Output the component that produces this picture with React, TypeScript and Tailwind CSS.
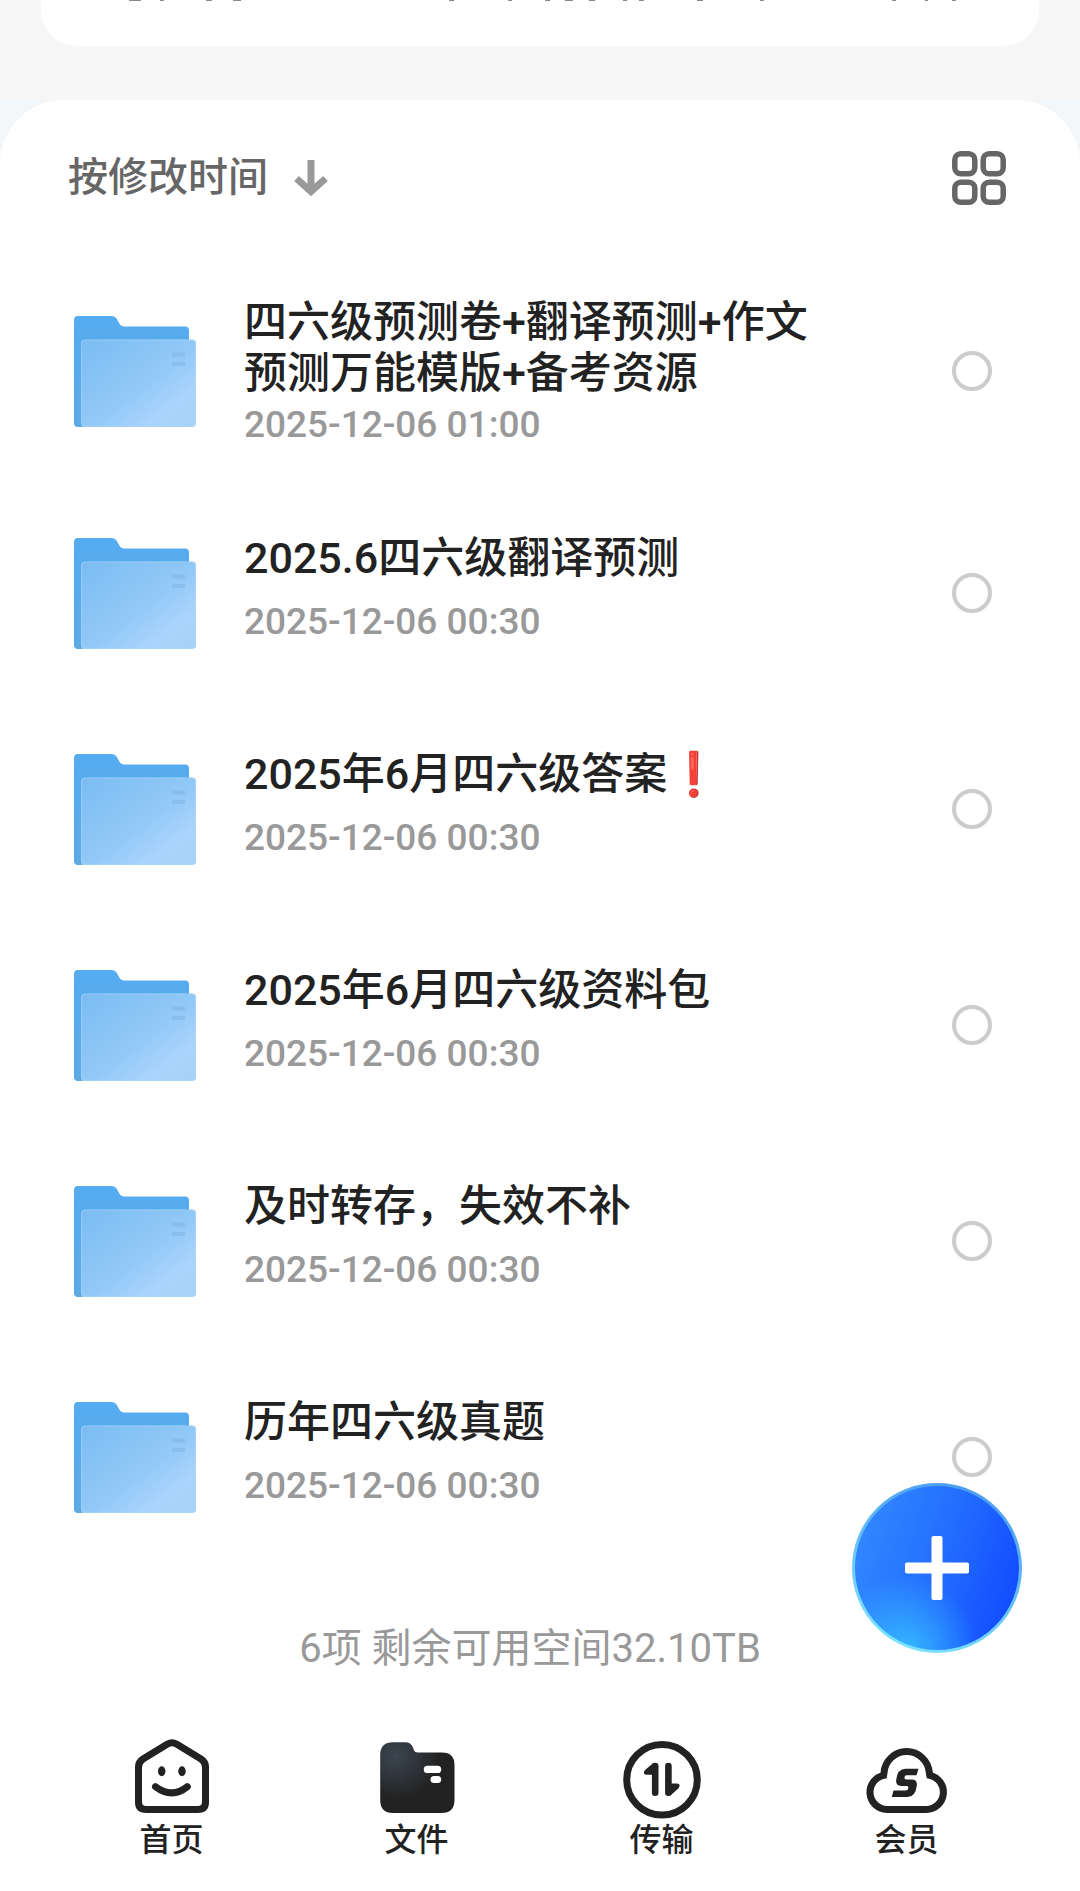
import React from "react";

type Item = { name: string; mark?: string; time: string };

const items: Item[] = [
  { name: "四六级预测卷+翻译预测+作文预测万能模版+备考资源", time: "2025-12-06 01:00" },
  { name: "2025.6四六级翻译预测", time: "2025-12-06 00:30" },
  { name: "2025年6月四六级答案", mark: "❗", time: "2025-12-06 00:30" },
  { name: "2025年6月四六级资料包", time: "2025-12-06 00:30" },
  { name: "及时转存，失效不补", time: "2025-12-06 00:30" },
  { name: "历年四六级真题", time: "2025-12-06 00:30" },
];

function FolderIcon() {
  return (
    <svg viewBox="0 0 122 111" className="h-[111px] w-[122px] shrink-0" aria-hidden="true">
      <defs>
        <linearGradient id="folder-back" x1="0" y1="0" x2="0" y2="1">
          <stop offset="0" stopColor="#55acf0" />
          <stop offset="1" stopColor="#5ba8e4" />
        </linearGradient>
        <linearGradient id="folder-front" x1="0" y1="0" x2="1" y2="1">
          <stop offset="0" stopColor="#7bbcf2" />
          <stop offset="0.5" stopColor="#90c8f7" />
          <stop offset="0.8" stopColor="#abd4fc" />
          <stop offset="1" stopColor="#a8d1fa" />
        </linearGradient>
      </defs>
      <path
        d="M4 0H38Q41 0 42.500 2.500L46 8.500Q47.500 10.500 50 10.500H111Q115 10.500 115 14.500V60H12V107Q11 111 7 111H4Q0 111 0 107V4Q0 0 4 0Z"
        fill="url(#folder-back)"
      />
      <rect x="7" y="23.500" width="115" height="87.500" rx="4" fill="url(#folder-front)" />
      <rect x="7.500" y="24" width="114" height="86.500" rx="4" fill="none" stroke="#b4d8f8" strokeOpacity="0.5" />
      <path d="M98 38.500H111M98 48H111" stroke="#85b5e2" strokeOpacity="0.6" strokeWidth="4" />
    </svg>
  );
}

function HomeIcon() {
  return (
    <svg viewBox="0 0 84 84" className="size-[84px]" fill="none" stroke="#222" strokeWidth="7" aria-hidden="true">
      <path d="M8.500 31Q8.500 26 13 23L37.500 8Q42 5.500 46.500 8L71 23Q75.500 26 75.500 31V66Q75.500 73.500 68 73.500H16Q8.500 73.500 8.500 66Z" />
      <ellipse cx="31.700" cy="35.300" rx="3.700" ry="5" fill="#222" stroke="none" />
      <ellipse cx="52" cy="35.300" rx="3.700" ry="5" fill="#222" stroke="none" />
      <path d="M25.500 50.700Q41.900 63 57.300 50.700" strokeLinecap="round" />
    </svg>
  );
}

function FilesIcon() {
  return (
    <svg viewBox="0 0 84 84" className="size-[84px]" aria-hidden="true">
      <defs>
        <radialGradient id="files-fill" cx="0.2" cy="0.2" r="0.6">
          <stop offset="0" stopColor="#3b4651" />
          <stop offset="1" stopColor="#222" />
        </radialGradient>
      </defs>
      <path
        d="M18 6.300H30Q36 6.300 38 11.500L39 14.500Q40 16.500 42.500 16.500H67Q79.500 16.500 79.500 29V64Q79.500 77 66.500 77H18Q5.200 77 5.200 64V19Q5.200 6.300 18 6.300Z"
        fill="url(#files-fill)"
      />
      <rect x="48.800" y="29.700" width="17.400" height="7.300" rx="3.600" fill="#fff" />
      <rect x="55.500" y="40" width="10.700" height="7" rx="3.500" fill="#fff" />
    </svg>
  );
}

function TransferIcon() {
  return (
    <svg viewBox="0 0 84 84" className="size-[84px]" fill="#222" stroke="#222" aria-hidden="true">
      <circle cx="42" cy="43.700" r="35.300" fill="none" strokeWidth="7" />
      <path d="M35.200 30V56.700M48.400 30V56.700" strokeWidth="6.600" strokeLinecap="round" />
      <path d="M33 27.200L25 34Q22 38.700 27 38.700H36V28Z" stroke="none" />
      <path d="M47 47.500H57Q61.500 48 58.500 52.200L50.500 59.400L47 58Z" stroke="none" />
    </svg>
  );
}

function MemberIcon() {
  return (
    <svg viewBox="0 0 84 84" className="size-[84px]" fill="none" stroke="#222" aria-hidden="true">
      <path
        d="M22 73.500A17.300 17.300 0 0 1 18.600 39.300L19 36.800A22.700 22.700 0 0 1 64.300 36.800L64.800 39.300A17.300 17.300 0 0 1 61.400 73.500Z"
        strokeWidth="7"
      />
      <path
        d="M53.500 32.800L51.500 39.200H41.500Q39.800 39.200 39.500 41.300Q39.200 43.400 41 43.400H47Q52.500 43.400 51.800 49.500Q50.500 61 42.500 61H26.800L28.500 54.500H40.500Q43 54.500 43.400 52Q43.600 50 41.800 50H36Q30.500 50 31.200 43.800Q32.500 32.800 40.500 32.800Z"
        fill="#222"
        stroke="none"
      />
    </svg>
  );
}

const tabs = [
  { label: "首页", Icon: HomeIcon },
  { label: "文件", Icon: FilesIcon },
  { label: "传输", Icon: TransferIcon },
  { label: "会员", Icon: MemberIcon },
];

export default function App() {
  return (
    <div className="relative flex min-h-screen flex-col bg-[#f7f7f7] font-['Roboto','Noto_Sans_CJK_SC',sans-serif] text-[#222]">
      <div className="mx-[41px] h-[46px] rounded-b-[36px] bg-white">
        <svg viewBox="0 0 998 1" preserveAspectRatio="none" className="h-px w-full" aria-hidden="true">
          <path
            d="M88 0.500h12M119 0.500h4M165 0.500h6M192 0.500h8M408 0.500h5M467 0.500h4M504 0.500h5M524 0.500h8M548 0.500h6M582 0.500h4M598 0.500h5M656 0.500h6M719 0.500h4M851 0.500h4M884 0.500h3M911 0.500h4"
            stroke="#888"
          />
        </svg>
      </div>

      <div className="mt-[54px] flex grow flex-col bg-[#f4f7fa]">
        <main className="flex grow flex-col rounded-t-[64px] bg-white">
          <header className="flex h-[157px] items-center justify-between pr-[74px] pb-0.5 pl-[68px]">
            <button type="button" className="flex items-center gap-[26px] text-[40px] leading-[60px] font-medium text-[#666]">
              按修改时间
              <svg viewBox="0 0 34 38" className="h-[38px] w-[34px]" fill="none" stroke="#999" strokeWidth="7" aria-hidden="true">
                <path d="M17 1V32M2.500 19.500L17 32.500L31.500 19.500" />
              </svg>
            </button>
            <button type="button" aria-label="宫格视图">
              <svg viewBox="0 0 54 54" className="size-[54px]" fill="none" stroke="#666" strokeWidth="5.500" aria-hidden="true">
                <rect x="2.800" y="2.800" width="20" height="20" rx="6" />
                <rect x="31.200" y="2.800" width="20" height="20" rx="6" />
                <rect x="2.800" y="31.200" width="20" height="20" rx="6" />
                <rect x="31.200" y="31.200" width="20" height="20" rx="6" />
              </svg>
            </button>
          </header>

          <ul>
            {items.map((item, i) => (
              <li key={item.name} className="py-[37px] pr-[88px] pl-[74px]">
                <label className="flex min-h-[142px] items-center gap-12">
                  <FolderIcon />
                  <span className={i === 0 ? "flex flex-1 flex-col gap-[3px] pt-[3px]" : "flex flex-1 flex-col gap-[15px] pb-2"}>
                    <span className="mr-[60px] text-[43px] leading-[51px] font-medium">
                      {item.name}
                      {item.mark && <span className="text-[#ee2b2b]">{item.mark}</span>}
                    </span>
                    <time className="text-[37px] leading-[46px] font-medium text-[#999]">{item.time}</time>
                  </span>
                  <input
                    type="checkbox"
                    className="size-10 shrink-0 appearance-none rounded-full border-4 border-[#ccc] checked:border-[#1d5cff] checked:bg-[#1d5cff]"
                  />
                </label>
              </li>
            ))}
          </ul>

          <p className="mt-[54px] mb-[54px] pr-5 text-center text-[40px] leading-[60px] text-[#999]">6项 剩余可用空间32.10TB</p>

          <nav className="mt-auto grid grid-cols-4 pr-[51px] pb-[31px] pl-[49px]">
            {tabs.map(({ label, Icon }) => (
              <a key={label} href="#" className="flex flex-col items-center text-[32px] leading-[40px] font-medium">
                <Icon />
                {label}
              </a>
            ))}
          </nav>
        </main>
      </div>

      <button
        type="button"
        aria-label="添加"
        className="absolute right-[58px] bottom-[238px] flex size-[170px] items-center justify-center rounded-full bg-white"
      >
        <svg viewBox="0 0 170 170" className="size-full" aria-hidden="true">
          <defs>
            <linearGradient id="fab-fill" x1="0" y1="0.3" x2="1" y2="0.6">
              <stop offset="0" stopColor="#3388ff" />
              <stop offset="0.5" stopColor="#246fff" />
              <stop offset="1" stopColor="#124cff" />
            </linearGradient>
            <radialGradient id="fab-glow" cx="0.3" cy="1" r="0.45">
              <stop offset="0" stopColor="#35b9ff" />
              <stop offset="1" stopColor="#35b9ff" stopOpacity="0" />
            </radialGradient>
            <linearGradient id="fab-rim" x1="0.7" y1="0" x2="0.3" y2="1">
              <stop offset="0" stopColor="#4c9cf0" />
              <stop offset="1" stopColor="#7de4ff" />
            </linearGradient>
          </defs>
          <circle cx="85" cy="85" r="84" fill="url(#fab-fill)" />
          <circle cx="85" cy="85" r="84" fill="url(#fab-glow)" />
          <circle cx="85" cy="85" r="83.500" fill="none" stroke="url(#fab-rim)" strokeWidth="3" />
          <rect x="53" y="79.500" width="64" height="11" rx="2" fill="#fff" />
          <rect x="79.500" y="53" width="11" height="64" rx="2" fill="#fff" />
        </svg>
      </button>
    </div>
  );
}
